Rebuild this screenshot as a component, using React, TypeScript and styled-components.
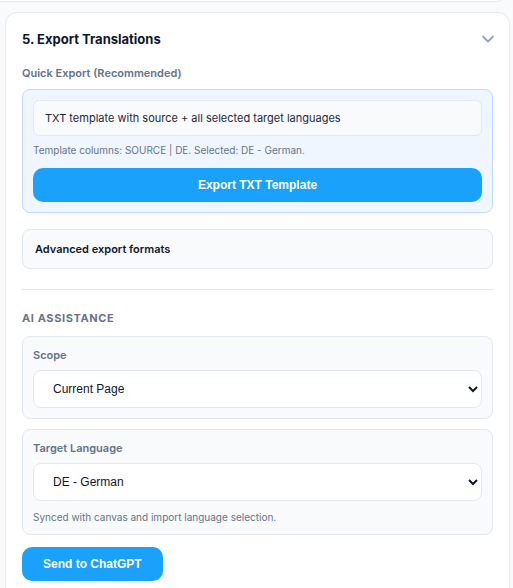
import styled, { createGlobalStyle } from "styled-components";

const GlobalStyle = createGlobalStyle`
    html, body {
        margin: 0;
        padding: 0;
        background: #f8fafc;
        font-family: Inter, "Noto Sans", sans-serif;
    }
    * { box-sizing: border-box; }
`

const Page = styled.div`
    display: flex;
    flex-direction: column;
    padding: 0 3px 20px 5px;
`

const PrevCard = styled.div`
    height: 10px;
    margin: -8px 4px 0 -20px;
    background: #ffffff;
    border: 1px solid #e5e9f0;
    border-top: none;
    border-radius: 0 0 12px 12px;
`

const Card = styled.section`
    margin-top: 10px;
    background: #ffffff;
    border: 1px solid #e2e8f0;
    border-radius: 12px;
    padding: 15px 16px 24px 16px;
    display: flex;
    flex-direction: column;
`

const Header = styled.div`
    display: flex;
    align-items: center;
    justify-content: space-between;
    height: 22px;
    margin-bottom: 15px;
`

const Title = styled.h2`
    margin: 0;
    font-size: 13px;
    font-weight: 700;
    color: #0f172a;
`

const Label = styled.div<{ $upper?: boolean }>`
    font-size: 11px;
    line-height: ${p => p.$upper ? "14px" : "16px"};
    font-weight: ${p => p.$upper ? 700 : 600};
    color: #64748b;
    text-transform: ${p => p.$upper ? "uppercase" : "none"};
    letter-spacing: ${p => p.$upper ? "0.6px" : "0"};
`

const QuickBox = styled.div`
    margin-top: 8px;
    background: #eff6ff;
    border: 1px solid #bfdbfe;
    border-radius: 8px;
    padding: 10px;
    display: flex;
    flex-direction: column;
`

const InfoField = styled.div`
    height: 36px;
    display: flex;
    align-items: center;
    padding: 0 11px;
    background: #f8fafc;
    border: 1px solid #e2e8f0;
    border-radius: 6px;
    font-size: 11px;
    color: #1e293b;
`

const Hint = styled.div<{ $gap?: number }>`
    margin-top: ${p => p.$gap ?? 7}px;
    font-size: 10px;
    line-height: 14px;
    color: #64748b;
`

const PrimaryButton = styled.button<{ $full?: boolean; $top?: number }>`
    margin-top: ${p => p.$top ?? 0}px;
    height: 34px;
    width: ${p => p.$full ? "100%" : "auto"};
    align-self: ${p => p.$full ? "stretch" : "flex-start"};
    padding: 0 21px;
    border: none;
    border-radius: 10px;
    background: #1aa1fb;
    color: #ffffff;
    font-family: "Liberation Sans", Arial, sans-serif;
    font-size: 12px;
    font-weight: 700;
    cursor: pointer;
`

const Panel = styled.div<{ $top?: number }>`
    margin-top: ${p => p.$top ?? 10}px;
    background: #f8fafc;
    border: 1px solid #e2e8f0;
    border-radius: 8px;
    padding: 10px;
    display: flex;
    flex-direction: column;
`

const AdvancedRow = styled.div`
    margin-top: 16px;
    height: 40px;
    display: flex;
    align-items: center;
    padding: 0 12px;
    background: #f8fafc;
    border: 1px solid #e2e8f0;
    border-radius: 8px;
    font-size: 11px;
    font-weight: 600;
    color: #0f172a;
`

const Divider = styled.hr`
    width: 100%;
    margin: 20px 0 21px 0;
    border: none;
    border-top: 1px solid #e2e8f0;
`

const Select = styled.select`
    margin-top: 7px;
    height: 38px;
    width: 100%;
    padding: 0 6px 0 15px;
    background: #ffffff;
    border: 1px solid #e2e8f0;
    border-radius: 8px;
    font-family: "Liberation Sans", Arial, sans-serif;
    font-size: 12px;
    color: #0f172a;
`

const ChevronIcon = styled.svg`
    margin-right: -1px;
    flex-shrink: 0;
`

function Chevron() {
    return (
        <ChevronIcon width="12" height="12" viewBox="0 0 12 12" fill="none" stroke="#94a3b8" strokeWidth="1.8" strokeLinecap="round" strokeLinejoin="round">
            <path d="M1 3.5l5 5 5-5" />
        </ChevronIcon>
    );
}

function App() {
    return (
        <Page>
            <GlobalStyle />
            <PrevCard />
            <Card>
                <Header>
                    <Title>5. Export Translations</Title>
                    <Chevron />
                </Header>
                <Label>Quick Export (Recommended)</Label>
                <QuickBox>
                    <InfoField>TXT template with source + all selected target languages</InfoField>
                    <Hint>Template columns: SOURCE | DE. Selected: DE - German.</Hint>
                    <PrimaryButton $full $top={11}>Export TXT Template</PrimaryButton>
                </QuickBox>
                <AdvancedRow>Advanced export formats</AdvancedRow>
                <Divider />
                <Label $upper>AI Assistance</Label>
                <Panel $top={11}>
                    <Label>Scope</Label>
                    <Select defaultValue="page">
                        <option value="page">Current Page</option>
                        <option value="all">All Pages</option>
                    </Select>
                </Panel>
                <Panel>
                    <Label>Target Language</Label>
                    <Select defaultValue="de">
                        <option value="de">DE - German</option>
                        <option value="fr">FR - French</option>
                    </Select>
                    <Hint $gap={9}>Synced with canvas and import language selection.</Hint>
                </Panel>
                <PrimaryButton $top={12}>Send to ChatGPT</PrimaryButton>
            </Card>
        </Page>
    );
}

export default App;
